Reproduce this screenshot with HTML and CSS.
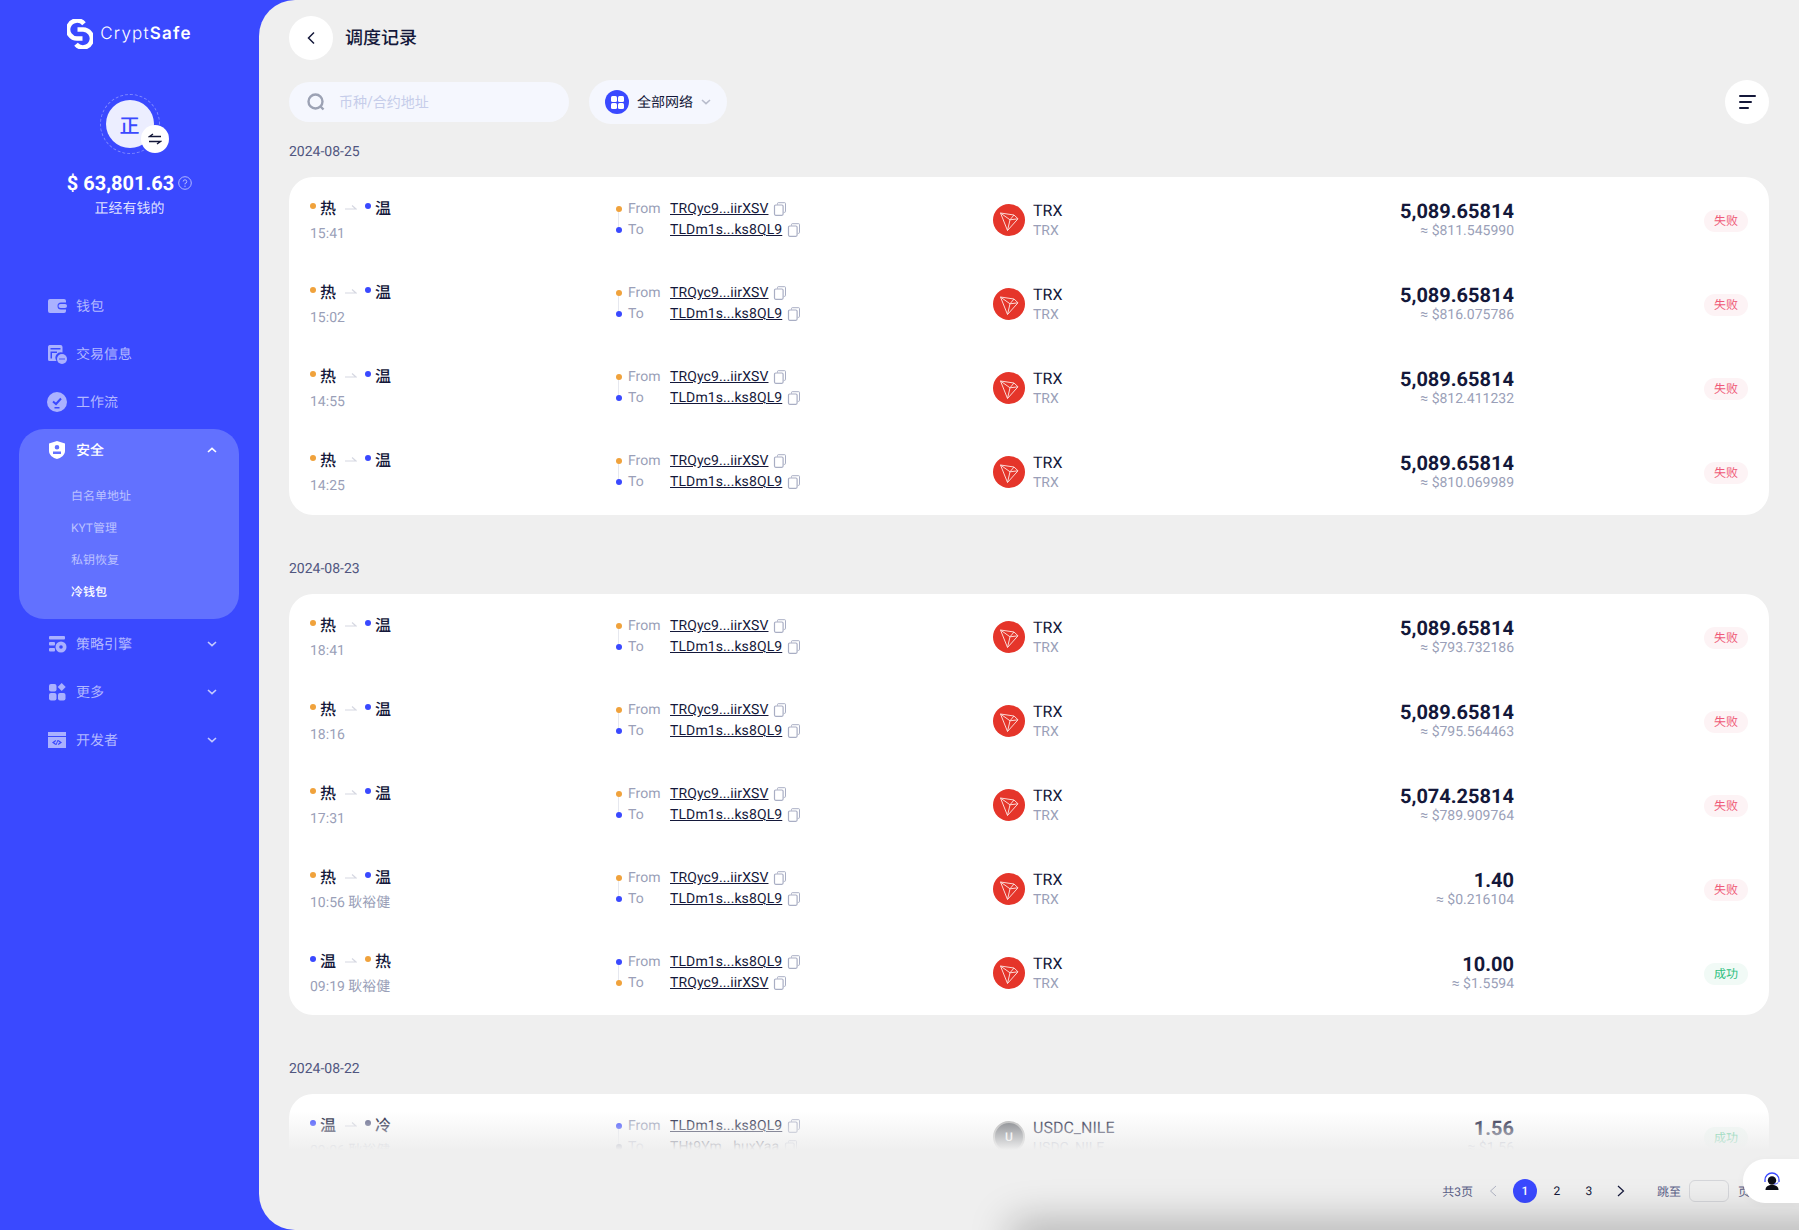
FILE: index.html
```html
<!DOCTYPE html>
<html lang="zh-CN">
<head>
  <meta charset="UTF-8">
  <title>调度记录</title>
  <link rel="stylesheet" href="styles.css">
</head>
<body>
  <svg class="defs" width="0" height="0">
    <symbol id="copy" viewBox="0 0 14 14">
      <path d="M4.500 2.600V1.400c0-.4.3-.7.7-.7h6.600c.4 0 .7.3.7.7v8.200c0 .4-.3.7-.7.7h-1.100" fill="none" stroke="#a9aec4" stroke-width="1"/>
      <rect x="1.500" y="3" width="8.600" height="10.300" rx="1.200" fill="#fff" stroke="#a9aec4" stroke-width="1.200"/>
    </symbol>
    <symbol id="arrow" viewBox="0 0 12 6">
      <path d="M0 5h11L7 1.500" fill="none" stroke="#d6d8e2" stroke-width="1.200"/>
    </symbol>
    <symbol id="tron" viewBox="0 0 32 32">
      <circle cx="16" cy="16" r="16" fill="#e5352a"/>
      <path d="M7.500 9l13.500 2 4 3.800L14.500 26.500zM7.500 9l9.500 6.800-2.500 10.700M17 15.800l4-4.800M17 15.800l8-1" fill="none" stroke="#fbd9d5" stroke-width="1" stroke-linejoin="round"/>
    </symbol>
    <symbol id="chev-down" viewBox="0 0 10 6">
      <path d="M1 1l4 3.600L9 1" fill="none" stroke="currentColor" stroke-width="1.600"/>
    </symbol>
  </svg>

  <div class="app">
    <aside class="sidebar">
      <div class="logo">
        <svg class="logo-mark" viewBox="0 0 26 30" width="26" height="30">
          <path d="M17 4.800A9 9 0 1 0 11 19.500H15.500" fill="none" stroke="#fff" stroke-width="4.600"/>
          <path d="M9 25.200A9 9 0 1 0 15 10.500H10.500" fill="none" stroke="#fff" stroke-width="4.600"/>
        </svg>
        <span class="logo-text">Crypt<b>Safe</b></span>
      </div>

      <div class="account">
        <div class="avatar">
          <span class="avatar-in">正</span>
          <span class="swap">
            <svg viewBox="0 0 14 12" width="14" height="12">
              <path d="M13 3.500H1.500L5 1M1 8.500h11.500L9 11" fill="none" stroke="#14183a" stroke-width="1.400"/>
            </svg>
          </span>
        </div>
        <div class="balance">
          <span>$ 63,801.63</span>
          <svg viewBox="0 0 14 14" width="14" height="14">
            <circle cx="7" cy="7" r="6.300" fill="none" stroke="#b3b9ff" stroke-width="1"/>
            <path d="M5.200 5.500A1.800 1.800 0 1 1 7 7.400v1" fill="none" stroke="#b3b9ff" stroke-width="1"/>
            <circle cx="7" cy="10.200" r=".7" fill="#b3b9ff"/>
          </svg>
        </div>
        <div class="acc-name">正经有钱的</div>
      </div>

      <nav class="nav">
        <a class="nav-item">
          <svg class="nav-ico" viewBox="0 0 20 20"><path fill-rule="evenodd" d="M3 3h14a2 2 0 0 1 2 2v1.500h-5a3.500 3.500 0 0 0 0 7h5V15a2 2 0 0 1-2 2H3a2 2 0 0 1-2-2V5a2 2 0 0 1 2-2z"/><rect x="11.500" y="8" width="8.500" height="4" rx="2"/></svg>
          <span>钱包</span>
        </a>
        <a class="nav-item">
          <svg class="nav-ico" viewBox="0 0 20 20"><path fill-rule="evenodd" d="M2.500 1h11a2 2 0 0 1 2 2v5.500a5.500 5.500 0 0 0-6 8.500h-7a1.500 1.500 0 0 1-1.500-1.500V3a2 2 0 0 1 1.500-2zm1 3v1.500h10V4zm0 3.500v7h1.500v-5.500h5V7.500z"/><circle cx="15" cy="15" r="5"/><circle cx="13" cy="15" r=".8" fill="#3a49ff"/><circle cx="15" cy="15" r=".8" fill="#3a49ff"/><circle cx="17" cy="15" r=".8" fill="#3a49ff"/></svg>
          <span>交易信息</span>
        </a>
        <a class="nav-item">
          <svg class="nav-ico" viewBox="0 0 20 20"><circle cx="10" cy="10" r="10"/><path d="M6 9.500l3 2.500 5-5.500" fill="none" stroke="#3a49ff" stroke-width="2"/><rect x="7.500" y="15" width="5" height="1.500" fill="#3a49ff"/></svg>
          <span>工作流</span>
        </a>

        <div class="nav-group">
          <a class="nav-item active">
            <svg class="nav-ico" viewBox="0 0 20 20"><path fill-rule="evenodd" d="M10 1l8 2.500V11c0 4-4 7-8 8-4-1-8-4-8-8V3.500zM10 5a2.300 2.300 0 1 0 0 4.600A2.300 2.300 0 0 0 10 5zm-4 6.500V14h8v-2.500z"/></svg>
            <span>安全</span>
            <svg class="nav-chev up"><use href="#chev-down"/></svg>
          </a>
          <a class="sub-item">白名单地址</a>
          <a class="sub-item">KYT管理</a>
          <a class="sub-item">私钥恢复</a>
          <a class="sub-item on">冷钱包</a>
        </div>

        <a class="nav-item">
          <svg class="nav-ico" viewBox="0 0 20 20"><rect x="2" y="2" width="16" height="3.500" rx="1"/><rect x="2" y="8" width="6" height="3.500" rx="1"/><rect x="2" y="14" width="6" height="3.500" rx="1"/><circle cx="14" cy="13" r="5.500"/><circle cx="14" cy="13" r="1.800" fill="#3a49ff"/></svg>
          <span>策略引擎</span>
          <svg class="nav-chev"><use href="#chev-down"/></svg>
        </a>
        <a class="nav-item">
          <svg class="nav-ico" viewBox="0 0 20 20"><rect x="2" y="2" width="7.500" height="7.500" rx="2"/><rect x="2" y="11" width="7.500" height="7.500" rx="2"/><rect x="11" y="11" width="7.500" height="7.500" rx="2"/><path d="M14.700 1l4 4-4 4-4-4z"/></svg>
          <span>更多</span>
          <svg class="nav-chev"><use href="#chev-down"/></svg>
        </a>
        <a class="nav-item">
          <svg class="nav-ico" viewBox="0 0 20 20"><path fill-rule="evenodd" d="M1 2h18v4H1zM1 7h18v11H1zm7.500 3L5 12.500 8.500 15l.7-1-2-1.500 2-1.500zm3 0l-.7 1 2 1.500-2 1.500.7 1L15 12.500zm-1 0l-2 5h1l2-5z"/></svg>
          <span>开发者</span>
          <svg class="nav-chev"><use href="#chev-down"/></svg>
        </a>
      </nav>
    </aside>

    <main class="main">
      <header class="head">
        <button class="back">
          <svg viewBox="0 0 10 14" width="10" height="14"><path d="M8 1.500L2.500 7 8 12.500" fill="none" stroke="#14183a" stroke-width="1.500"/></svg>
        </button>
        <h1>调度记录</h1>
      </header>

      <div class="toolbar">
        <label class="search">
          <svg viewBox="0 0 18 18" width="18" height="18"><circle cx="8.500" cy="8.500" r="7" fill="none" stroke="#9ca2b4" stroke-width="2.400"/><path d="M13.500 13.500l3 3" stroke="#9ca2b4" stroke-width="2.400"/></svg>
          <input type="text" placeholder="币种/合约地址">
        </label>
        <div class="net">
          <span class="net-ico"><i></i><i></i><i></i><i></i></span>
          <span class="net-name">全部网络</span>
          <svg class="net-chev"><use href="#chev-down"/></svg>
        </div>
        <button class="menu-btn"><i></i><i></i><i></i></button>
      </div>

      <div class="list">
        <div class="date">2024-08-25</div>
        <section class="card">
          <div class="row">
            <div class="route"><div class="route-top"><i class="dot hot"></i>热<svg class="arr"><use href="#arrow"/></svg><i class="dot warm"></i>温</div><div class="muted">15:41</div></div>
            <div class="addr"><div class="line"><i class="dot hot"></i><span class="lbl">From</span><a>TRQyc9...iirXSV</a><svg class="cp"><use href="#copy"/></svg></div><div class="line"><i class="dot warm"></i><span class="lbl">To</span><a>TLDm1s...ks8QL9</a><svg class="cp"><use href="#copy"/></svg></div></div>
            <div class="coin"><svg class="coin-ico"><use href="#tron"/></svg><div><div class="coin-name">TRX</div><div class="muted">TRX</div></div></div>
            <div class="amt"><div class="num">5,089.65814</div><div class="muted">≈ $811.545990</div></div>
            <div class="st fail">失败</div>
          </div>
          <div class="row">
            <div class="route"><div class="route-top"><i class="dot hot"></i>热<svg class="arr"><use href="#arrow"/></svg><i class="dot warm"></i>温</div><div class="muted">15:02</div></div>
            <div class="addr"><div class="line"><i class="dot hot"></i><span class="lbl">From</span><a>TRQyc9...iirXSV</a><svg class="cp"><use href="#copy"/></svg></div><div class="line"><i class="dot warm"></i><span class="lbl">To</span><a>TLDm1s...ks8QL9</a><svg class="cp"><use href="#copy"/></svg></div></div>
            <div class="coin"><svg class="coin-ico"><use href="#tron"/></svg><div><div class="coin-name">TRX</div><div class="muted">TRX</div></div></div>
            <div class="amt"><div class="num">5,089.65814</div><div class="muted">≈ $816.075786</div></div>
            <div class="st fail">失败</div>
          </div>
          <div class="row">
            <div class="route"><div class="route-top"><i class="dot hot"></i>热<svg class="arr"><use href="#arrow"/></svg><i class="dot warm"></i>温</div><div class="muted">14:55</div></div>
            <div class="addr"><div class="line"><i class="dot hot"></i><span class="lbl">From</span><a>TRQyc9...iirXSV</a><svg class="cp"><use href="#copy"/></svg></div><div class="line"><i class="dot warm"></i><span class="lbl">To</span><a>TLDm1s...ks8QL9</a><svg class="cp"><use href="#copy"/></svg></div></div>
            <div class="coin"><svg class="coin-ico"><use href="#tron"/></svg><div><div class="coin-name">TRX</div><div class="muted">TRX</div></div></div>
            <div class="amt"><div class="num">5,089.65814</div><div class="muted">≈ $812.411232</div></div>
            <div class="st fail">失败</div>
          </div>
          <div class="row">
            <div class="route"><div class="route-top"><i class="dot hot"></i>热<svg class="arr"><use href="#arrow"/></svg><i class="dot warm"></i>温</div><div class="muted">14:25</div></div>
            <div class="addr"><div class="line"><i class="dot hot"></i><span class="lbl">From</span><a>TRQyc9...iirXSV</a><svg class="cp"><use href="#copy"/></svg></div><div class="line"><i class="dot warm"></i><span class="lbl">To</span><a>TLDm1s...ks8QL9</a><svg class="cp"><use href="#copy"/></svg></div></div>
            <div class="coin"><svg class="coin-ico"><use href="#tron"/></svg><div><div class="coin-name">TRX</div><div class="muted">TRX</div></div></div>
            <div class="amt"><div class="num">5,089.65814</div><div class="muted">≈ $810.069989</div></div>
            <div class="st fail">失败</div>
          </div>
        </section>

        <div class="date">2024-08-23</div>
        <section class="card">
          <div class="row">
            <div class="route"><div class="route-top"><i class="dot hot"></i>热<svg class="arr"><use href="#arrow"/></svg><i class="dot warm"></i>温</div><div class="muted">18:41</div></div>
            <div class="addr"><div class="line"><i class="dot hot"></i><span class="lbl">From</span><a>TRQyc9...iirXSV</a><svg class="cp"><use href="#copy"/></svg></div><div class="line"><i class="dot warm"></i><span class="lbl">To</span><a>TLDm1s...ks8QL9</a><svg class="cp"><use href="#copy"/></svg></div></div>
            <div class="coin"><svg class="coin-ico"><use href="#tron"/></svg><div><div class="coin-name">TRX</div><div class="muted">TRX</div></div></div>
            <div class="amt"><div class="num">5,089.65814</div><div class="muted">≈ $793.732186</div></div>
            <div class="st fail">失败</div>
          </div>
          <div class="row">
            <div class="route"><div class="route-top"><i class="dot hot"></i>热<svg class="arr"><use href="#arrow"/></svg><i class="dot warm"></i>温</div><div class="muted">18:16</div></div>
            <div class="addr"><div class="line"><i class="dot hot"></i><span class="lbl">From</span><a>TRQyc9...iirXSV</a><svg class="cp"><use href="#copy"/></svg></div><div class="line"><i class="dot warm"></i><span class="lbl">To</span><a>TLDm1s...ks8QL9</a><svg class="cp"><use href="#copy"/></svg></div></div>
            <div class="coin"><svg class="coin-ico"><use href="#tron"/></svg><div><div class="coin-name">TRX</div><div class="muted">TRX</div></div></div>
            <div class="amt"><div class="num">5,089.65814</div><div class="muted">≈ $795.564463</div></div>
            <div class="st fail">失败</div>
          </div>
          <div class="row">
            <div class="route"><div class="route-top"><i class="dot hot"></i>热<svg class="arr"><use href="#arrow"/></svg><i class="dot warm"></i>温</div><div class="muted">17:31</div></div>
            <div class="addr"><div class="line"><i class="dot hot"></i><span class="lbl">From</span><a>TRQyc9...iirXSV</a><svg class="cp"><use href="#copy"/></svg></div><div class="line"><i class="dot warm"></i><span class="lbl">To</span><a>TLDm1s...ks8QL9</a><svg class="cp"><use href="#copy"/></svg></div></div>
            <div class="coin"><svg class="coin-ico"><use href="#tron"/></svg><div><div class="coin-name">TRX</div><div class="muted">TRX</div></div></div>
            <div class="amt"><div class="num">5,074.25814</div><div class="muted">≈ $789.909764</div></div>
            <div class="st fail">失败</div>
          </div>
          <div class="row">
            <div class="route"><div class="route-top"><i class="dot hot"></i>热<svg class="arr"><use href="#arrow"/></svg><i class="dot warm"></i>温</div><div class="muted">10:56 耿裕健</div></div>
            <div class="addr"><div class="line"><i class="dot hot"></i><span class="lbl">From</span><a>TRQyc9...iirXSV</a><svg class="cp"><use href="#copy"/></svg></div><div class="line"><i class="dot warm"></i><span class="lbl">To</span><a>TLDm1s...ks8QL9</a><svg class="cp"><use href="#copy"/></svg></div></div>
            <div class="coin"><svg class="coin-ico"><use href="#tron"/></svg><div><div class="coin-name">TRX</div><div class="muted">TRX</div></div></div>
            <div class="amt"><div class="num">1.40</div><div class="muted">≈ $0.216104</div></div>
            <div class="st fail">失败</div>
          </div>
          <div class="row">
            <div class="route"><div class="route-top"><i class="dot warm"></i>温<svg class="arr"><use href="#arrow"/></svg><i class="dot hot"></i>热</div><div class="muted">09:19 耿裕健</div></div>
            <div class="addr"><div class="line"><i class="dot warm"></i><span class="lbl">From</span><a>TLDm1s...ks8QL9</a><svg class="cp"><use href="#copy"/></svg></div><div class="line"><i class="dot hot"></i><span class="lbl">To</span><a>TRQyc9...iirXSV</a><svg class="cp"><use href="#copy"/></svg></div></div>
            <div class="coin"><svg class="coin-ico"><use href="#tron"/></svg><div><div class="coin-name">TRX</div><div class="muted">TRX</div></div></div>
            <div class="amt"><div class="num">10.00</div><div class="muted">≈ $1.5594</div></div>
            <div class="st ok">成功</div>
          </div>
        </section>

        <div class="date">2024-08-22</div>
        <section class="card">
          <div class="row">
            <div class="route"><div class="route-top"><i class="dot warm"></i>温<svg class="arr"><use href="#arrow"/></svg><i class="dot cold"></i>冷</div><div class="muted">09:06 耿裕健</div></div>
            <div class="addr"><div class="line"><i class="dot warm"></i><span class="lbl">From</span><a>TLDm1s...ks8QL9</a><svg class="cp"><use href="#copy"/></svg></div><div class="line"><i class="dot cold"></i><span class="lbl">To</span><a>THt9Ym...huxYaa</a><svg class="cp"><use href="#copy"/></svg></div></div>
            <div class="coin"><span class="coin-u">U</span><div><div class="coin-name">USDC_NILE</div><div class="muted">USDC_NILE</div></div></div>
            <div class="amt"><div class="num">1.56</div><div class="muted">≈ $1.56</div></div>
            <div class="st ok">成功</div>
          </div>
        </section>

        <div class="fade"></div>
      </div>

      <footer class="pager">
        <span class="pg-total">共3页</span>
        <a class="pg prev"><svg viewBox="0 0 8 12" width="8" height="12"><path d="M7 1L1.500 6 7 11" fill="none" stroke="currentColor" stroke-width="1"/></svg></a>
        <a class="pg cur">1</a>
        <a class="pg">2</a>
        <a class="pg">3</a>
        <a class="pg"><svg viewBox="0 0 8 12" width="8" height="12"><path d="M1 1l5.500 5L1 11" fill="none" stroke="currentColor" stroke-width="1.200"/></svg></a>
        <span class="pg-jump">跳至</span>
        <input class="pg-input" type="text">
        <span class="pg-unit">页</span>
      </footer>

      <div class="bottom-shadow"></div>
    </main>
  </div>

  <button class="support">
    <svg viewBox="0 0 18 18" width="18" height="18">
      <path d="M2 10V8a7 7 0 0 1 14 0v2" fill="none" stroke="#3a49ff" stroke-width="1.300"/>
      <circle cx="9" cy="8.500" r="4.200" fill="#0c0d18"/>
      <path d="M2.500 18c0-3.500 2.500-5 6.500-5s6.500 1.500 6.500 5z" fill="#0c0d18"/>
      <path d="M15 10.500c0 1-2 1.500-4 1.500" fill="none" stroke="#3a49ff" stroke-width="1"/>
    </svg>
  </button>
</body>
</html>
```

FILE: styles.css
```css
* {
  box-sizing: border-box;
}
html, body {
  margin: 0;
  height: 100%;
}
body {
  font-family: Roboto, "Noto Sans CJK SC", sans-serif;
  background: #3a49ff;
  color: #14183a;
  overflow: hidden;
  text-rendering: geometricPrecision;
}
.defs {
  position: absolute;
}
.app {
  display: flex;
  height: 100vh;
}

/* 侧边栏 */
.sidebar {
  width: 259px;
  flex: none;
  color: #fff;
}
.logo {
  display: flex;
  align-items: center;
  justify-content: center;
  gap: 7px;
  height: 30px;
  margin-top: 19px;
}
.logo-text {
  font-family: Inter, Lato, sans-serif;
  font-size: 17px;
  font-weight: 300;
  letter-spacing: 1.2px;
}
.logo-text b {
  font-weight: 600;
}
.account {
  display: flex;
  flex-direction: column;
  align-items: center;
  margin-top: 45px;
}
.avatar {
  position: relative;
  width: 60px;
  height: 60px;
  display: flex;
  align-items: center;
  justify-content: center;
  border: 1px dashed rgba(255, 255, 255, .35);
  border-radius: 50%;
}
.avatar-in {
  width: 48px;
  height: 48px;
  border-radius: 50%;
  background: #eceeff;
  color: #3a49ff;
  font-size: 20px;
  font-weight: 500;
  display: flex;
  align-items: center;
  justify-content: center;
}
.swap {
  position: absolute;
  left: 40px;
  top: 30px;
  width: 28px;
  height: 28px;
  border-radius: 50%;
  background: #fff;
  display: flex;
  align-items: center;
  justify-content: center;
}
.balance {
  display: flex;
  align-items: center;
  gap: 4px;
  margin-top: 15px;
  font-size: 20px;
  font-weight: 700;
  line-height: 28px;
}
.acc-name {
  margin-top: 2px;
  font-size: 14px;
  line-height: 20px;
  color: rgba(255, 255, 255, .85);
}
.nav {
  display: flex;
  flex-direction: column;
  margin-top: 63px;
}
.nav-item {
  display: flex;
  align-items: center;
  height: 48px;
  padding: 0 0 0 47px;
  font-size: 14px;
  color: #b2b8ff;
  position: relative;
}
.nav-ico {
  width: 20px;
  height: 20px;
  margin-right: 9px;
  fill: #aab1ff;
  flex: none;
}
.nav-chev {
  position: absolute;
  left: 207px;
  top: 21px;
  width: 10px;
  height: 6px;
  color: #c4c9ff;
}
.nav-chev.up {
  transform: rotate(180deg);
  color: #fff;
}
.nav-group {
  margin: 3px 20px 1px 19px;
  height: 190px;
  background: #6271ff;
  border-radius: 25px;
}
.nav-group .nav-item {
  padding-left: 28px;
  height: 42px;
}
.nav-group .nav-chev {
  left: 188px;
  top: 18px;
}
.nav-item.active {
  color: #fff;
  font-weight: 500;
}
.nav-item.active .nav-ico {
  fill: #fff;
}
.sub-item {
  display: block;
  height: 32px;
  line-height: 32px;
  padding-left: 52px;
  font-size: 12px;
  color: #bcc2ff;
}
.nav-group .nav-item + .sub-item {
  margin-top: 9px;
}
.sub-item.on {
  color: #fff;
  font-weight: 500;
}

/* 主内容 */
.main {
  flex: 1;
  min-width: 0;
  position: relative;
  display: flex;
  flex-direction: column;
  background: #efefef;
  border-radius: 36px 0 0 36px;
  padding: 16px 30px 0;
  overflow: hidden;
}
.head {
  display: flex;
  align-items: center;
  gap: 12px;
  height: 44px;
  flex: none;
}
.back {
  width: 44px;
  height: 44px;
  border: none;
  border-radius: 50%;
  background: #fff;
  display: flex;
  align-items: center;
  justify-content: center;
  padding: 0;
}
h1 {
  margin: 0 0 3px;
  font-size: 18px;
  font-weight: 500;
}
.toolbar {
  display: flex;
  align-items: center;
  height: 44px;
  margin-top: 20px;
  flex: none;
}
.search {
  display: flex;
  align-items: center;
  gap: 14px;
  width: 280px;
  height: 40px;
  padding-left: 18px;
  border-radius: 20px;
  background: #f5f7fe;
}
.search input {
  border: none;
  outline: none;
  background: none;
  width: 200px;
  padding: 0;
  font: inherit;
  font-size: 14px;
}
.search input::placeholder {
  color: #c6cdea;
  opacity: 1;
}
.net {
  display: flex;
  align-items: center;
  margin-left: 20px;
  width: 138px;
  height: 44px;
  padding-left: 16px;
  border-radius: 22px;
  background: #f5f7fe;
  font-size: 14px;
}
.net-name {
  margin-bottom: 1px;
}
.net-ico {
  width: 24px;
  height: 24px;
  border-radius: 50%;
  background: #3a49ff;
  display: grid;
  grid-template-columns: 6px 6px;
  grid-auto-rows: 6px;
  gap: 1px;
  align-content: center;
  justify-content: center;
  margin-right: 8px;
}
.net-ico i {
  background: #fff;
  border-radius: 1.500px;
}
.net-chev {
  width: 10px;
  height: 6px;
  margin-left: 8px;
  color: #b8bccb;
}
.menu-btn {
  margin-left: auto;
  width: 44px;
  height: 44px;
  border: none;
  border-radius: 50%;
  background: #fff;
  display: flex;
  flex-direction: column;
  align-items: flex-start;
  justify-content: center;
  gap: 3.500px;
  padding: 0 0 0 14px;
}
.menu-btn i {
  display: block;
  height: 2.500px;
  width: 17px;
  background: #14183a;
  border-radius: 1px;
}
.menu-btn i:nth-child(2) {
  width: 13px;
}
.menu-btn i:nth-child(3) {
  width: 10px;
}

/* 列表 */
.list {
  flex: 1;
  min-height: 0;
  position: relative;
  overflow: hidden;
}
.date {
  height: 20px;
  line-height: 21px;
  font-size: 14px;
  color: #51567f;
  margin: 44px 0 15px;
}
.date:first-child {
  margin-top: 18px;
}
.card {
  background: #fff;
  border-radius: 24px;
  padding-top: 1px;
}
.date:first-child + .card {
  padding-bottom: 1px;
}
.row {
  display: grid;
  grid-template-columns: 306px 377px 300px 221px 1fr;
  grid-template-rows: 84px;
  align-items: center;
  padding: 0 21px;
  position: relative;
}
.route-top {
  display: flex;
  align-items: center;
  height: 29px;
  font-size: 16px;
  font-weight: 500;
}
.dot {
  display: inline-block;
  width: 6px;
  height: 6px;
  border-radius: 50%;
  flex: none;
  margin-right: 4px;
}
.route-top .dot {
  position: relative;
  top: -1px;
}
.hot {
  background: #f0a23c;
}
.warm {
  background: #3a49ff;
}
.cold {
  background: #5e6288;
}
.arr {
  width: 12px;
  height: 6px;
  margin: 0 8px 0 9px;
}
.muted {
  font-size: 14px;
  color: #9a9fb8;
  line-height: 18px;
}
.route .muted {
  line-height: 27px;
}
.addr {
  position: relative;
  font-size: 14px;
  margin-bottom: 1px;
}
.addr::before {
  content: "";
  position: absolute;
  left: 2px;
  top: 12px;
  height: 20px;
  border-left: 1px solid #e6e8ef;
}
.line {
  display: flex;
  align-items: center;
  height: 21px;
  position: relative;
}
.line .dot {
  margin-right: 6px;
}
.lbl {
  width: 42px;
  color: #9a9fb8;
}
.line a {
  color: #14183a;
  text-decoration: underline;
  line-height: 18px;
  letter-spacing: .1px;
}
.cp {
  width: 14px;
  height: 14px;
  margin-left: 5px;
}
.coin {
  display: flex;
  align-items: center;
  gap: 8px;
}
.coin-ico {
  width: 32px;
  height: 32px;
  flex: none;
}
.coin-u {
  width: 32px;
  height: 32px;
  border-radius: 50%;
  background: #6f7278;
  border: 2px solid #b5b5b5;
  color: #fff;
  font-size: 12px;
  font-weight: 500;
  display: flex;
  align-items: center;
  justify-content: center;
}
.coin-name {
  font-size: 16px;
  line-height: 22px;
}
.amt {
  text-align: right;
}
.num {
  font-size: 20px;
  font-weight: 700;
  line-height: 22px;
}
.st {
  justify-self: end;
  width: 44px;
  height: 22px;
  line-height: 22px;
  margin-top: 2px;
  border-radius: 11px;
  text-align: center;
  font-size: 12px;
}
.fail {
  color: #ef5a78;
  background: #fdf3f5;
}
.ok {
  color: #2fbf7f;
  background: #f1faf6;
}
.fade {
  position: absolute;
  left: 0;
  right: 0;
  bottom: 0;
  height: 56px;
  background: linear-gradient(rgba(239, 239, 239, 0) 30%, #efefef);
}

/* 分页 */
.pager {
  flex: none;
  height: 80px;
  display: flex;
  align-items: center;
  justify-content: flex-end;
  padding: 0 19px 0 0;
  font-size: 12px;
  color: #5c6188;
  position: relative;
  top: 1px;
}
.pg {
  width: 24px;
  height: 24px;
  margin-left: 8px;
  border-radius: 50%;
  display: flex;
  align-items: center;
  justify-content: center;
  color: #14183a;
}
.pg.prev {
  color: #b0b4c4;
}
.pg.cur {
  background: #3a49ff;
  color: #fff;
  font-weight: 500;
}
.pg-jump {
  margin-left: 24px;
}
.pg-input {
  width: 40px;
  height: 22px;
  margin: 0 9px 0 8px;
  padding: 0;
  background: none;
  border: 1px solid #d5d6da;
  border-radius: 6px;
  outline: none;
}
.bottom-shadow {
  position: absolute;
  left: 760px;
  right: -40px;
  bottom: -20px;
  height: 20px;
  box-shadow: 0 0 40px 8px rgba(0, 0, 0, .28);
}
.support {
  position: fixed;
  right: 0;
  top: 1159px;
  width: 56px;
  height: 44px;
  border: none;
  border-radius: 22px 0 0 22px;
  background: #fff;
  display: flex;
  align-items: center;
  padding: 0 0 0 20px;
  box-shadow: 0 2px 8px rgba(0, 0, 0, .04);
}
```
